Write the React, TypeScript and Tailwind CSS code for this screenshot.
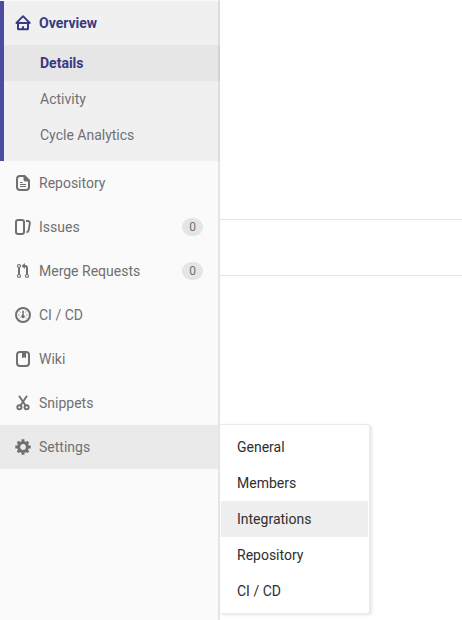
import type { ReactNode } from 'react';

const icons: Record<string, ReactNode> = {
  home: (
    <path
      fill="currentColor"
      d="M3.706 7h8.725L8.069 2.585 3.706 7zM7 13.369V12a1 1 0 0 1 2 0v1.369h3V9H4v4.369h3zM14 9v4.836c0 .833-.657 1.533-1.5 1.533h-9c-.843 0-1.5-.7-1.5-1.533V9h-.448a1.1 1.1 0 0 1-.783-1.873L6.934.887a1.5 1.5 0 0 1 2.269 0l6.165 6.24A1.1 1.1 0 0 1 14.585 9H14z"
    />
  ),
  doc: (
    <g fill="none" stroke="currentColor" strokeWidth="2">
      <path d="M9.6 1H5a3 3 0 0 0-3 3v8a3 3 0 0 0 3 3h6a3 3 0 0 0 3-3V5.4z" />
      <path d="M8.5 1v3.5a2 2 0 0 0 2 2H14V5l-4-4z" fill="currentColor" stroke="none" />
      <path d="M5.5 7.5h1.5M5.5 9.5h5M5.5 11.5h5" strokeWidth="1.1" strokeLinecap="round" />
    </g>
  ),
  issues: (
    <g fill="none" stroke="currentColor" strokeWidth="2">
      <rect x="1" y="1" width="8" height="14" rx="2.2" />
      <path d="M11 2h1.8c1.3 0 2.2.9 2 2.3l-1.1 6.9c-.2 1.2-.9 1.9-2.3 2.2" strokeWidth="1.9" />
    </g>
  ),
  merge: (
    <g fill="none" stroke="currentColor">
      <circle cx="4" cy="3" r="1.5" strokeWidth="1.2" />
      <circle cx="4" cy="13" r="1.5" strokeWidth="1.2" />
      <circle cx="12" cy="13" r="1.5" strokeWidth="1.2" />
      <path d="M4 4.5v7M12 11.5V5a2 2 0 0 0-2-2H9" strokeWidth="2" />
      <path d="M6.6 3l3.3-3v6z" fill="currentColor" stroke="none" />
    </g>
  ),
  gauge: (
    <g fill="none" stroke="currentColor">
      <circle cx="8" cy="8" r="7" strokeWidth="2" />
      <circle cx="8" cy="9.5" r="1.8" fill="currentColor" stroke="none" />
      <path d="M8 4.3v5" strokeWidth="1.5" strokeLinecap="round" />
      <path d="M3.3 8h1.2M11.5 8h1.2M4.6 4.6l.8.8M11.4 4.6l-.8.8M4.6 11.4l.8-.8M11.4 11.4l-.8-.8" strokeWidth="1" />
    </g>
  ),
  book: (
    <g>
      <rect x="2" y="1" width="12" height="14" rx="3" fill="none" stroke="currentColor" strokeWidth="2" />
      <path d="M7 1h4v5.6c0 .5-.4.6-.8.3L9 6l-1.2.9c-.4.3-.8.2-.8-.3z" fill="currentColor" />
    </g>
  ),
  snippet: (
    <g fill="none" stroke="currentColor" strokeWidth="1.9">
      <circle cx="4.4" cy="12.3" r="2.1" />
      <circle cx="11.6" cy="12.3" r="2.1" />
      <path d="M4.5 1.4l6 9.2M11.5 1.4l-6 9.2" strokeLinecap="round" />
    </g>
  ),
  gear: (
    <g fill="none" stroke="currentColor">
      <circle cx="8" cy="8" r="4.4" strokeWidth="3" />
      <path
        d="M8 .3v3M8 12.7v3M.3 8h3M12.7 8h3M2.7 2.7l2.1 2.1M11.2 11.2l2.1 2.1M13.3 2.7l-2.1 2.1M4.8 11.2l-2.1 2.1"
        strokeWidth="2.9"
      />
    </g>
  ),
};

function Icon({ name }: { name: string }) {
  return (
    <svg viewBox="0 0 16 16" className="mr-2 size-4 shrink-0" aria-hidden="true">
      {icons[name]}
    </svg>
  );
}

const items = [
  { label: 'Repository', icon: 'doc' },
  { label: 'Issues', icon: 'issues', count: 0 },
  { label: 'Merge Requests', icon: 'merge', count: 0 },
  { label: 'CI / CD', icon: 'gauge' },
  { label: 'Wiki', icon: 'book' },
  { label: 'Snippets', icon: 'snippet' },
  { label: 'Settings', icon: 'gear', active: true },
];

const settings = ['General', 'Members', 'Integrations', 'Repository', 'CI / CD'];

export default function App() {
  return (
    <div className="relative flex h-[620px] w-[462px] overflow-hidden bg-white font-['Roboto',sans-serif] text-sm text-[#707070]">
      <aside className="flex w-[220px] shrink-0 flex-col border-r-2 border-[#e5e5e5] bg-[#fafafa] pt-px">
        <section className="-mr-0.5 h-40 border-l-4 border-[#4b4ba3] bg-black/[0.04]">
          <a className="flex h-11 items-center pl-[11px] font-bold text-[#393982]">
            <Icon name="home" />
            Overview
          </a>
          <a className="flex h-9 items-center bg-black/[0.04] pl-9 font-bold text-[#393982]">Details</a>
          <a className="flex h-9 items-center pl-9">Activity</a>
          <a className="flex h-9 items-center pl-9">Cycle Analytics</a>
        </section>
        <nav>
          {items.map((item) => (
            <a
              key={item.label}
              className={`flex h-11 items-center pr-[15px] pl-[15px] ${item.active ? 'bg-[#eaeaea]' : ''}`}
            >
              <Icon name={item.icon} />
              {item.label}
              {item.count !== undefined && (
                <span className="ml-auto flex h-[18px] w-[21px] items-center justify-center rounded-full bg-[#e5e5e5] text-xs">
                  {item.count}
                </span>
              )}
            </a>
          ))}
        </nav>
      </aside>
      <main className="flex-1 pt-[219px]">
        <div className="h-[57px] border-y border-[#e5e5e5]" />
      </main>
      <div className="absolute top-[424px] left-[220px] h-[190px] w-[150px] rounded-r-[3px] border border-l-0 border-[#ebebeb] bg-white py-1 pr-px pl-px text-[#2e2e2e] shadow-[2px_1px_3px_rgba(0,0,0,0.1)]">
        {settings.map((label) => (
          <a
            key={label}
            className={`flex h-9 items-center pl-4 ${label === 'Integrations' ? 'bg-[#eeeeee]' : ''}`}
          >
            {label}
          </a>
        ))}
      </div>
    </div>
  );
}
